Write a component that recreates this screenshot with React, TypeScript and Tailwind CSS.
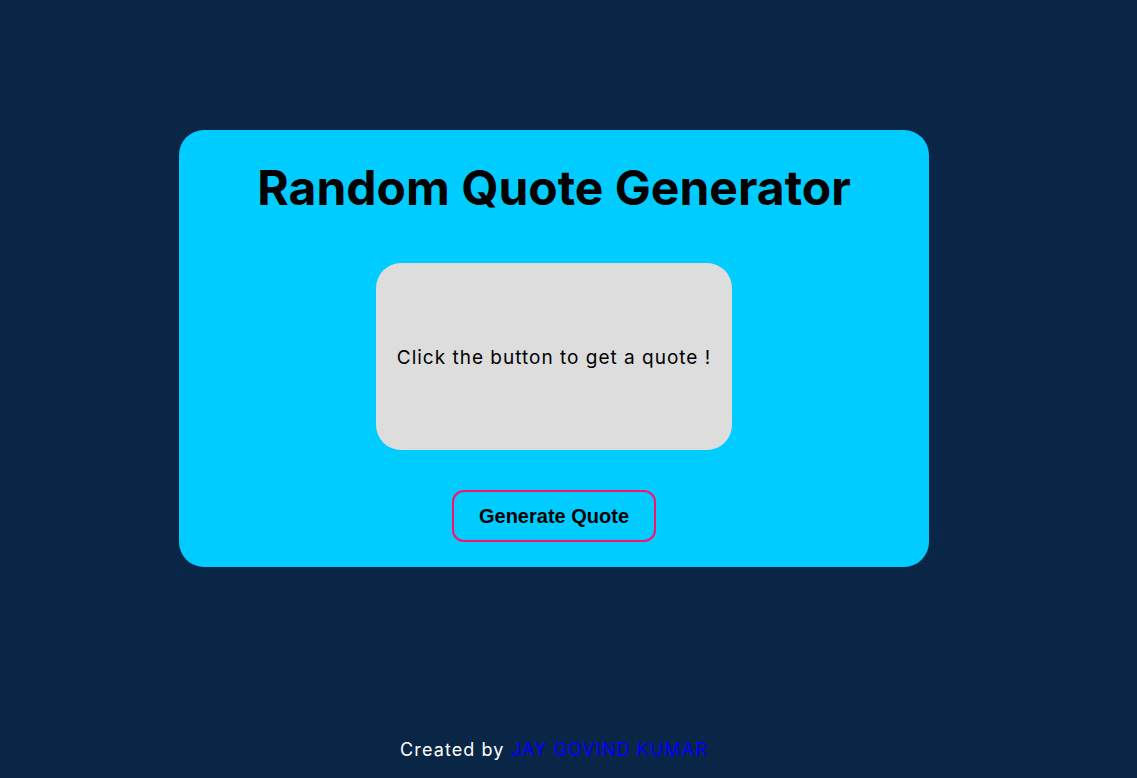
export default function App() {
  return (
    <div className="flex min-h-screen flex-col items-center bg-[#0a2647] pr-[29px] font-['Inter',sans-serif]">
      <main className="mt-[130px] flex w-[750px] flex-col items-center rounded-[25px] bg-[#00ccff] pt-[34px] pb-[25px]">
        <h1 className="text-[48px] leading-none font-bold text-black">Random Quote Generator</h1>
        <div className="mt-[51px] flex h-[187px] w-[356px] items-center justify-center rounded-[25px] bg-[#dddddd] px-4 pt-[4px]">
          <p className="text-[19px] tracking-[1px] text-black">Click the button to get a quote !</p>
        </div>
        <button className="mt-[40px] h-[52px] w-[204px] rounded-[12px] border-2 border-[#ff0f6b] font-['Liberation_Sans',sans-serif] text-[20px] font-bold text-black">
          Generate Quote
        </button>
      </main>
      <footer className="mt-auto pb-[14px] text-[18px] leading-7 tracking-[1.1px] text-white">
        Created by <span className="text-[#0000ff]">JAY GOVIND KUMAR</span>
      </footer>
    </div>
  );
}
